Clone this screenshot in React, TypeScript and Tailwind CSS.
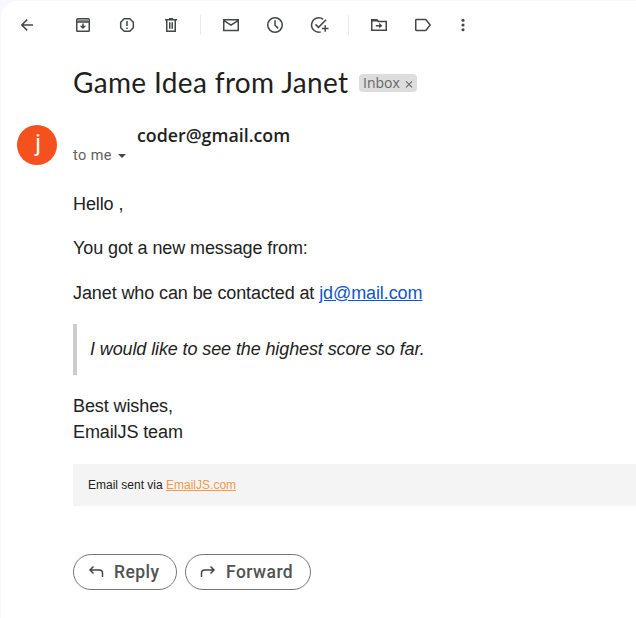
import type { ReactNode } from "react";

function Icon({ children, className = "" }: { children: ReactNode; className?: string }) {
  return (
    <svg
      viewBox="0 0 20 20"
      className={`size-5 shrink-0 ${className}`}
      fill="none"
      stroke="#444746"
      strokeWidth="1.5"
    >
      {children}
    </svg>
  );
}

function Toolbar() {
  return (
    <div className="flex h-[46px] items-center pt-px pl-[17px]">
      <Icon>
        <path d="M16 10H5M10.2 4.6 4.8 10l5.4 5.4" />
      </Icon>
      <Icon className="ml-9">
        <path d="M3.75 5q0-1.25 1.25-1.25h10q1.25 0 1.25 1.25v10.5q0 .75-.75.75h-11q-.75 0-.75-.75z" />
        <path d="M4.5 5.5h11" strokeWidth="2" stroke="#8a8c8b" />
        <path d="M3.5 7h13M10 8.6v4" />
        <path d="M6.8 10.7h6.4L10 14z" fill="#444746" stroke="none" />
      </Icon>
      <Icon className="ml-6">
        <path d="M7.2 3.75h5.6l3.5 3.5v5.5l-3.5 3.5H7.2l-3.5-3.5v-5.5z" />
        <path d="M10 6v5M10 12.4v1.6" />
      </Icon>
      <Icon className="ml-6">
        <path d="M4 4.75h12M8 3.7h4M5.75 5v11.25h8.5V5M8.75 7.2v6.6M11.25 7.2v6.6" />
      </Icon>
      <div className="ml-[19px] h-5 w-px bg-[#e8eaed]" />
      <Icon className="ml-5">
        <path d="M2.75 4.75h14.5v10.8H2.75zM3 5.6l7 4.6 7-4.6" />
      </Icon>
      <Icon className="ml-6">
        <circle cx="10" cy="10" r="7.25" />
        <path d="M10 5.2v5l3.2 3.2" />
      </Icon>
      <Icon className="ml-6">
        <path d="M11.8 16.9A7.2 7.2 0 1 1 14.2 4.3M6.5 9.4l3 3 7.6-7.6M16.2 10.2v6.6M12.9 13.5h6.6" />
      </Icon>
      <div className="ml-[19px] h-5 w-px bg-[#e8eaed]" />
      <Icon className="ml-5">
        <path d="M2.75 15.25V4.75h5L9.4 6.4h7.85v8.85zM6.8 10.7h5" />
        <path d="M3 4.5h4.7l1.7 2.1H3z" fill="#444746" stroke="none" />
        <path d="M10.2 7.8v5.8l3.2-2.9z" fill="#444746" stroke="none" />
      </Icon>
      <Icon className="ml-6">
        <path d="M2.75 5.2q0-.7.7-.7h8.8q.6 0 1 .5l3.9 5-3.9 5q-.4.5-1 .5h-8.8q-.7 0-.7-.7z" />
      </Icon>
      <Icon className="ml-5">
        <g fill="#444746" stroke="none">
          <circle cx="10" cy="5.2" r="1.55" />
          <circle cx="10" cy="10" r="1.55" />
          <circle cx="10" cy="14.8" r="1.55" />
        </g>
      </Icon>
    </div>
  );
}

export default function App() {
  return (
    <div className="h-[618px] w-[636px] overflow-hidden bg-[#f6f8fc] pt-px pl-px font-['Liberation_Sans',Arial,sans-serif]">
      <main className="h-full rounded-tl-2xl bg-white">
        <div className="-ml-px">
          <Toolbar />
          <div className="mt-[18px] flex h-9 items-center pl-[73px]">
            <h1 className="w-[276px] pb-0.5 font-['Lato',sans-serif] text-[28px] leading-[34px] tracking-[0.35px] whitespace-nowrap text-[#1f1f1f]">
              Game Idea from Janet
            </h1>
            <span className="ml-2.5 flex h-[18px] w-[58px] items-center gap-1.5 rounded bg-[#ddd] pl-1 font-['Open_Sans',sans-serif] text-[14px] leading-[18px] text-[#666]">
              <span>Inbox</span>
              <svg viewBox="0 0 8 8" className="-ml-px size-2 translate-y-px" fill="none" stroke="#666" strokeWidth="1.1">
                <path d="m1 1.3 6 6M7 1.3l-6 6" />
              </svg>
            </span>
          </div>
          <div className="mt-6 flex h-10 pl-[17px]">
            <div className="flex size-10 items-center justify-center rounded-full bg-[#f4511e] pb-1 pl-0.5 font-['Roboto',sans-serif] text-[24px] leading-none text-white">
              j
            </div>
            <div className="ml-4 w-16 pt-[21px] font-['Roboto',sans-serif] text-[14.5px] leading-5 tracking-[0.4px] text-[#5e5e5e]">
              <span className="flex items-center gap-1.5 whitespace-nowrap">
                to me
                <span className="border-x-4 border-t-4 border-x-transparent border-t-[#444746]" />
              </span>
            </div>
            <strong className="font-['Open_Sans',sans-serif] text-[17.8px] leading-5 font-semibold text-[#1f1f1f]">
              coder@gmail.com
            </strong>
          </div>
          <article className="mt-[26px] pl-[73px] text-[18px] leading-[26px] tracking-[-0.1px] text-[#222]">
            <p>Hello ,</p>
            <p className="mt-[18px]">You got a new message from:</p>
            <p className="mt-[19px]">
              Janet who can be contacted at <a className="text-[#1155cc] underline">jd@mail.com</a>
            </p>
            <blockquote className="mt-[18px] flex h-[51px] items-center border-l-4 border-[#ccc] pb-px pl-[13px] tracking-[-0.11px] italic">
              I would like to see the highest score so far.
            </blockquote>
            <p className="mt-[18px]">
              Best wishes,
              <br />
              EmailJS team
            </p>
            <footer className="mt-[19px] flex h-[42px] items-center bg-[#f4f4f4] pl-[15px] text-[12px] tracking-normal whitespace-pre">
              Email sent via <a className="text-[#f2994a] underline">EmailJS.com</a>
            </footer>
          </article>
          <div className="mt-12 flex gap-2 pl-[73px] font-['Roboto',sans-serif] text-[17.5px] font-medium tracking-[0.45px] text-[#505352]">
            <button className="flex h-9 w-[104px] items-center rounded-full border border-[#747775] pl-3">
              <Icon>
                <path d="M7.5 4.5 4 8l3.5 3.5M4.2 8h9.3q3 0 3 3v4" />
              </Icon>
              <span className="ml-2">Reply</span>
            </button>
            <button className="flex h-9 w-[126px] items-center rounded-full border border-[#747775] pl-3">
              <Icon>
                <path d="m12.5 4.5 3.5 3.5-3.5 3.5M15.8 8H6.5q-3 0-3 3v4" />
              </Icon>
              <span className="ml-2">Forward</span>
            </button>
          </div>
        </div>
      </main>
    </div>
  );
}
